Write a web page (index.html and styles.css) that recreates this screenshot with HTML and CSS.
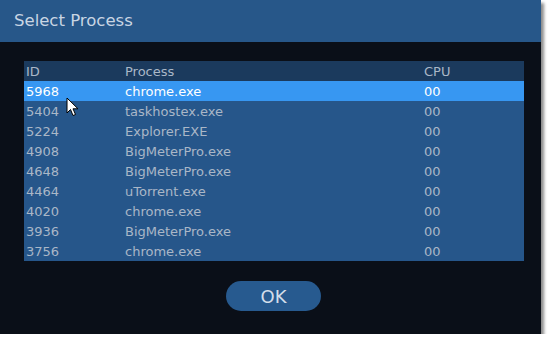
FILE: index.html
```html
<!DOCTYPE html>
<html lang="en">
<head>
  <meta charset="UTF-8" />
  <title>Select Process</title>
  <link rel="stylesheet" href="styles.css">
</head>
<body>
  <div class="dialog">
    <div class="titlebar">Select Process</div>
    <div class="content">
      <table class="procs">
        <thead>
          <tr>
            <th class="id">ID</th>
            <th class="name">Process</th>
            <th class="cpu">CPU</th>
          </tr>
        </thead>
        <tbody>
          <tr class="selected"><td>5968</td><td>chrome.exe</td><td>00</td></tr>
          <tr><td>5404</td><td>taskhostex.exe</td><td>00</td></tr>
          <tr><td>5224</td><td>Explorer.EXE</td><td>00</td></tr>
          <tr><td>4908</td><td>BigMeterPro.exe</td><td>00</td></tr>
          <tr><td>4648</td><td>BigMeterPro.exe</td><td>00</td></tr>
          <tr><td>4464</td><td>uTorrent.exe</td><td>00</td></tr>
          <tr><td>4020</td><td>chrome.exe</td><td>00</td></tr>
          <tr><td>3936</td><td>BigMeterPro.exe</td><td>00</td></tr>
          <tr><td>3756</td><td>chrome.exe</td><td>00</td></tr>
        </tbody>
      </table>
      <div class="actions">
        <button class="ok">OK</button>
      </div>
    </div>
    <!-- mouse pointer over the list -->
    <svg class="pointer" width="13" height="20" viewBox="0 0 13 20">
      <path d="M1 1 L1 16 L4.5 12.5 L7 18.5 L9.5 17.5 L7 11.8 L12 11.8 Z" fill="#fff" stroke="#000" stroke-width="1" stroke-linejoin="round"/>
    </svg>
  </div>
</body>
</html>
```

FILE: styles.css
```css
body {
  margin: 0;
  background-color: #fff;
  font-family: "DejaVu Sans", Verdana, sans-serif;
}
.dialog {
  position: relative;
  width: 541px;
  height: 334px;
  background-color: #0a0f18;
  box-shadow: 3px 3px 3px #8c8c8c;
  overflow: hidden;
}
.titlebar {
  height: 42px;
  line-height: 41px;
  padding-left: 14px;
  background-color: #275789;
  color: #c9d5e3;
  font-size: 16.5px;
}
.content {
  padding: 19px 17px 0 24px;
}
table.procs {
  border-collapse: collapse;
  width: 500px;
  background-color: #26568a;
  font-size: 13px;
}
th, td {
  height: 18px;
  line-height: 18px;
  padding: 2px 0 0 2px;
  text-align: left;
  font-weight: normal;
  vertical-align: middle;
  color: #aab7c7;
}
thead tr {
  background-color: #1b3a5d;
}
th.id {
  width: 97px;
}
th.name {
  width: 297px;
}
tr.selected {
  background-color: #3797f2;
}
tr.selected td {
  color: #fff;
}
.actions {
  display: flex;
  justify-content: center;
  padding-top: 20px;
  padding-right: 1px;
}
button.ok {
  width: 95px;
  height: 30px;
  border: none;
  border-radius: 15px;
  background-color: #275a8f;
  color: #d3deea;
  font-family: "DejaVu Sans", Verdana, sans-serif;
  font-size: 18px;
}
.pointer {
  position: absolute;
  left: 66px;
  top: 97px;
}
```
